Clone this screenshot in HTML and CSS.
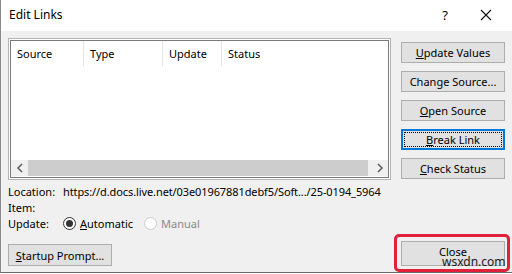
FILE: index.html
```html
<!DOCTYPE html>
<html>
<head>
<meta charset="utf-8">
<link rel="stylesheet" href="styles.css">
</head>
<body>
<div class="window">
  <div class="titlebar">
    <div class="title">Edit Links</div>
    <div class="tb-buttons">
      <span class="help">?</span>
      <svg class="close-x" width="12" height="12" viewBox="0 0 12 12"><path d="M1 1 L11 11 M11 1 L1 11" stroke="#111" stroke-width="1.1" fill="none"/></svg>
    </div>
  </div>
  <div class="content">
    <div class="left">
      <div class="listbox">
        <div class="listinner">
          <div class="header">
            <div class="col c1">Source</div>
            <div class="col c2">Type</div>
            <div class="col c3">Update</div>
            <div class="col c4">Status</div>
          </div>
          <div class="rows"></div>
          <div class="hscroll">
            <div class="arrow"><svg width="8" height="10" viewBox="0 0 8 10"><path d="M6 1 L2 5 L6 9" stroke="#606060" stroke-width="1.6" fill="none"/></svg></div>
            <div class="track"><div class="thumb"></div></div>
            <div class="arrow"><svg width="8" height="10" viewBox="0 0 8 10"><path d="M2 1 L6 5 L2 9" stroke="#606060" stroke-width="1.6" fill="none"/></svg></div>
          </div>
        </div>
      </div>
      <div class="info">
        <div class="inforow"><span class="lbl">Location:</span><span class="val">https://d.docs.live.net/03e01967881debf5/Soft.../25-0194_5964</span></div>
        <div class="inforow"><span class="lbl">Item:</span></div>
        <div class="inforow"><span class="lbl">Update:</span>
          <span class="radio on"><span class="dot"></span></span><span class="rtext"><u>A</u>utomatic</span>
          <span class="radio off"></span><span class="rtext dis">Manual</span>
        </div>
      </div>
      <div class="bottom-left">
        <button class="btn startup"><u>S</u>tartup Prompt...</button>
      </div>
    </div>
    <div class="right">
      <button class="btn"><u>U</u>pdate Values</button>
      <button class="btn">Chan<u>g</u>e Source...</button>
      <button class="btn"><u>O</u>pen Source</button>
      <button class="btn focus"><span class="focusrect"><u>B</u>reak Link</span></button>
      <button class="btn"><u>C</u>heck Status</button>
      <div class="spacer"></div>
      <div class="closewrap">
        <button class="btn closebtn">Close</button>
        <div class="highlight"></div>
        <div class="watermark">wsxdn.com</div>
      </div>
    </div>
  </div>
</div>
</body>
</html>
```
FILE: styles.css
```css
* { box-sizing: border-box; }
html, body { margin: 0; padding: 0; background: #ffffff; }
body { width: 512px; height: 274px; overflow: hidden; font-family: "Noto Sans", "Open Sans", sans-serif; font-size: 11px; color: #000; }
.window { width: 512px; height: 273px; border-left: 1px solid #8a8a8a; border-bottom: 1px solid #6a6a6a; display: flex; flex-direction: column; background: #f0f0f0; }
.titlebar { height: 31px; background: #ffffff; display: flex; align-items: center; justify-content: space-between; }
.title { padding-left: 8px; font-size: 12px; margin-top: -2px; }
.tb-buttons { display: flex; align-items: center; gap: 32px; padding-right: 20px; margin-top: -2px; }
.help { font-size: 13px; }
.content { flex: 1; display: flex; padding: 7px 7px 6px 7px; gap: 10px; }
.left { width: 383px; display: flex; flex-direction: column; }
.listbox { height: 142px; border: 1px solid #b4b4b4; background: #fff; padding: 1px; }
.listinner { height: 100%; border: 1px solid #7a7a7a; display: flex; flex-direction: column; }
.header { height: 25px; display: flex; }
.col { display: flex; align-items: center; padding-left: 6px; border-right: 1px solid #e5e5e5; height: 25px; }
.c1 { width: 73px; }
.c2 { width: 79px; }
.c3 { width: 59px; }
.c4 { width: 70px; border-right: 0; }
.rows { flex: 1; }
.hscroll { height: 16px; display: flex; background: #f0f0f0; margin-bottom: 1px; }
.arrow { width: 17px; display: flex; align-items: center; justify-content: center; }
.track { flex: 1; display: flex; }
.thumb { width: 340px; background: #cdcdcd; }
.info { padding-top: 3px; display: flex; flex-direction: column; }
.inforow { height: 16px; display: flex; align-items: center; }
.inforow:last-child { height: 17px; }
.lbl { width: 55px; flex: none; }
.val { white-space: nowrap; letter-spacing: -0.1px; }
.radio { width: 13px; height: 13px; border-radius: 50%; display: inline-flex; align-items: center; justify-content: center; margin-right: 4px; flex: none; }
.radio.on { border: 1px solid #333; background: #fff; }
.radio.on .dot { width: 7px; height: 7px; border-radius: 50%; background: #333; }
.radio.off { border: 1px solid #cccccc; background: #fff; }
.rtext { margin-right: 11px; }
.rtext.dis { color: #8a8a8a; }
.bottom-left { margin-top: auto; }
.btn { font-family: inherit; font-size: 11px; color: #000; background: #e1e1e1; border: 1px solid #adadad; padding: 0; margin: 0; height: 21px; display: flex; align-items: center; justify-content: center; }
.startup { width: 104px; height: 22px; }
.right { width: 104px; display: flex; flex-direction: column; gap: 8px; padding-top: 4px; }
.right .btn { width: 104px; }
.btn.focus { border: 2px solid #0078d7; }
.focusrect { border: 1px dotted #000; width: 98px; height: 15px; display: flex; align-items: center; justify-content: center; }
.spacer { flex: 1; }
.closewrap { position: relative; }
.closebtn { height: 25px; padding-bottom: 5px; }
.highlight { position: absolute; left: -7px; top: -7px; width: 116px; height: 38px; border: 3px solid #e3203a; border-radius: 5px; }
.watermark { position: absolute; left: 41px; top: 12px; font-size: 12px; color: #1a1a1a; }
```
